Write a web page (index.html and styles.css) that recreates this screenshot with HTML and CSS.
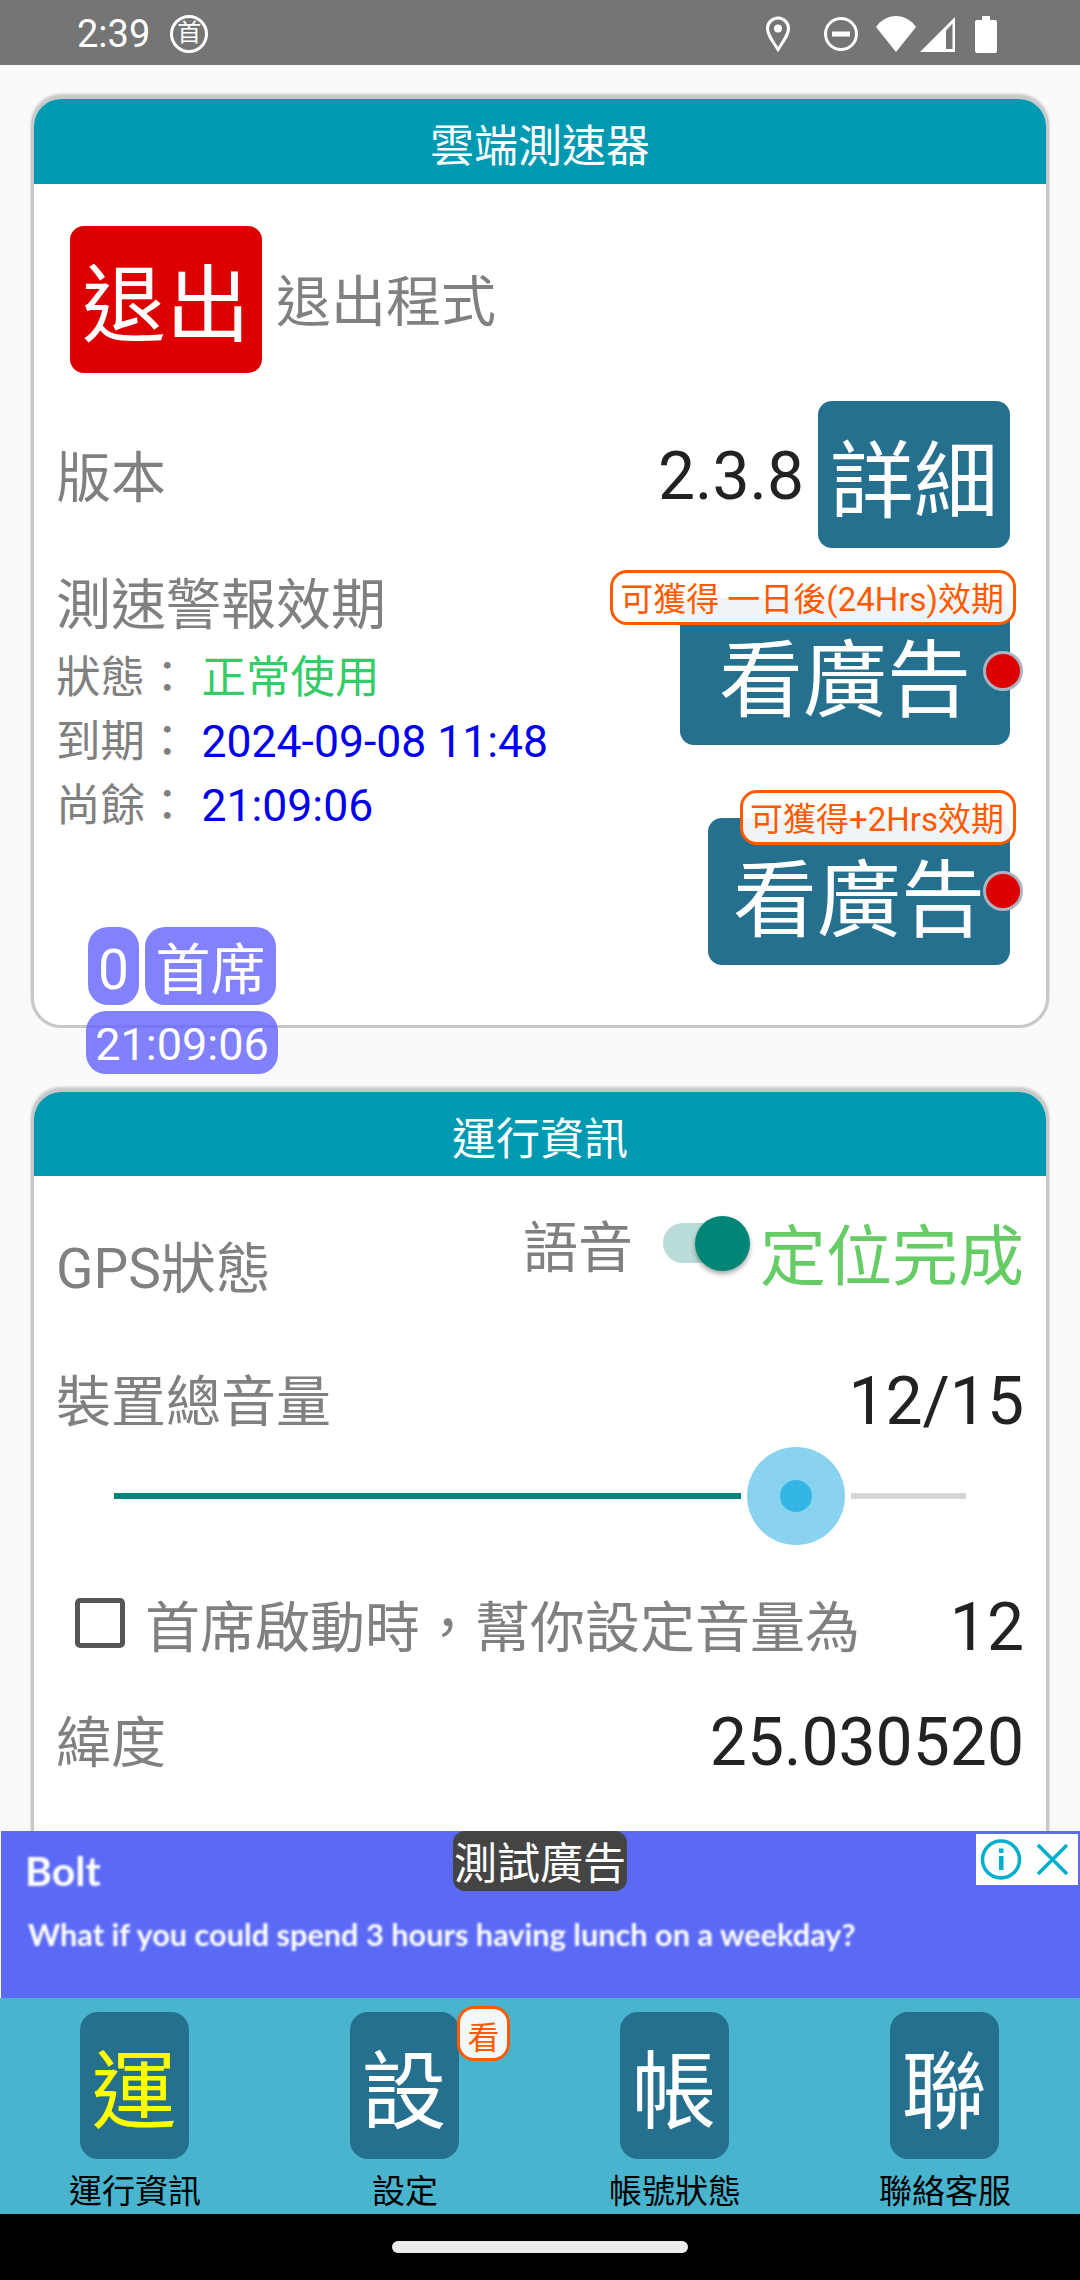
FILE: index.html
```html
<!DOCTYPE html>
<html lang="zh-Hant">
<head>
	<meta charset="UTF-8">
	<title>雲端測速器</title>
	<link rel="stylesheet" href="styles.css">
</head>
<body>
	<div class="statusbar">
		<span class="clock">2:39</span>
		<span class="notice">首</span>
		<div class="sysicons">
			<svg class="ic-pin" width="26" height="36" viewBox="0 0 26 36"><path d="M13 33.5C7 24 2.5 19 2.5 12.5a10.5 10.5 0 0 1 21 0C23.500 19 19 24 13 33.500Z" fill="none" stroke="#fff" stroke-width="3"/><circle cx="13" cy="12.500" r="4" fill="#fff"/></svg>
			<svg class="ic-dnd" width="36" height="36" viewBox="0 0 36 36"><circle cx="18" cy="18" r="15.500" fill="none" stroke="#fff" stroke-width="3"/><rect x="9" y="15.500" width="18" height="5" fill="#fff"/></svg>
			<svg class="ic-wifi" width="40" height="36" viewBox="0 0 40 36"><path d="M0 11C5 4 12 0 20 0s15 4 20 11L20 36Z" fill="#fff"/></svg>
			<svg class="ic-signal" width="35" height="35" viewBox="0 0 35 35"><path d="M35 0V35H0Z" fill="#fff"/><path d="M26 13.500V32H32.500V6.500Z" fill="#757575"/></svg>
			<svg class="ic-battery" width="22" height="37" viewBox="0 0 22 37"><path d="M7 0H15V4H20a2 2 0 0 1 2 2V35a2 2 0 0 1-2 2H2a2 2 0 0 1-2-2V6a2 2 0 0 1 2-2H7Z" fill="#fff"/></svg>
		</div>
	</div>

	<div class="scroll">
		<section class="card card-first">
			<h2 class="card-title">雲端測速器</h2>
			<div class="exit-row">
				<button class="btn btn-exit">退出</button>
				<span class="exit-label">退出程式</span>
			</div>
			<div class="version-row">
				<span class="label version-label">版本</span>
				<span class="value version-value">2.3.8</span>
				<button class="btn">詳細</button>
			</div>
			<div class="alert-row">
				<div class="alert-info">
					<div class="alert-title">測速警報效期</div>
					<div class="info-line">狀態： <span class="ok">正常使用</span></div>
					<div class="info-line">到期： <span class="date">2024-09-08 11:48</span></div>
					<div class="info-line">尚餘： <span class="date">21:09:06</span></div>
					<div class="seat">
						<div class="seat-top">
							<span class="pill pill-num">0</span>
							<span class="pill pill-name">首席</span>
						</div>
						<span class="pill pill-time">21:09:06</span>
					</div>
				</div>
				<div class="alert-actions">
					<div class="ad-btn ad-btn-day">
						<button class="btn btn-ad">看廣告</button>
						<span class="tag">可獲得 一日後(24Hrs)效期</span>
						<span class="dot"></span>
					</div>
					<div class="ad-btn ad-btn-hours">
						<button class="btn btn-ad">看廣告</button>
						<span class="tag">可獲得+2Hrs效期</span>
						<span class="dot"></span>
					</div>
				</div>
			</div>
		</section>

		<section class="card card-second">
			<h2 class="card-title">運行資訊</h2>
			<div class="gps-row">
				<span class="label gps-label">GPS狀態</span>
				<span class="label voice-label">語音</span>
				<span class="switch"><span class="switch-thumb"></span></span>
				<span class="gps-state">定位完成</span>
			</div>
			<div class="line-row volume-row">
				<span class="label">裝置總音量</span>
				<span class="value">12/15</span>
			</div>
			<div class="slider">
				<span class="slider-fill"></span>
				<span class="slider-thumb"><span class="slider-core"></span></span>
				<span class="slider-rest"></span>
			</div>
			<div class="line-row check-row">
				<span class="checkbox"></span>
				<span class="label check-label">首席啟動時，幫你設定音量為</span>
				<span class="value">12</span>
			</div>
			<div class="line-row lat-row">
				<span class="label">緯度</span>
				<span class="value">25.030520</span>
			</div>
		</section>
	</div>

	<div class="ad">
		<div class="ad-brand">Bolt</div>
		<div class="ad-copy">What if you could spend 3 hours having lunch on a weekday?</div>
		<div class="ad-test">測試廣告</div>
		<div class="ad-choice">
			<svg width="51" height="51" viewBox="0 0 51 51"><circle cx="25" cy="25.500" r="18.500" fill="none" stroke="#00aecd" stroke-width="3.500"/><rect x="23" y="22" width="4.500" height="14" fill="#00aecd"/><rect x="23" y="14.500" width="4.500" height="4.500" fill="#00aecd"/></svg>
			<svg width="51" height="51" viewBox="0 0 51 51"><path d="M11 11L40 40M40 11L11 40" fill="none" stroke="#00aecd" stroke-width="3.500"/></svg>
		</div>
	</div>

	<nav class="tabs">
		<div class="tab">
			<span class="tab-tile tab-active">運</span>
			<span class="tab-name">運行資訊</span>
		</div>
		<div class="tab">
			<span class="tab-tile">設</span>
			<span class="tab-name">設定</span>
			<span class="tab-badge">看</span>
		</div>
		<div class="tab">
			<span class="tab-tile">帳</span>
			<span class="tab-name">帳號狀態</span>
		</div>
		<div class="tab">
			<span class="tab-tile">聯</span>
			<span class="tab-name">聯絡客服</span>
		</div>
	</nav>

	<div class="navbar"><span class="home"></span></div>
</body>
</html>
```

FILE: styles.css
```css
* {
	margin: 0;
	padding: 0;
	box-sizing: border-box;
}
body {
	width: 1080px;
	height: 2280px;
	display: flex;
	flex-direction: column;
	overflow: hidden;
	background: #fafafa;
	font-family: Roboto, "Noto Sans CJK TC", sans-serif;
}
button {
	font-family: inherit;
	border: none;
}

/* status bar */
.statusbar {
	height: 65px;
	flex: none;
	display: flex;
	align-items: center;
	padding: 3px 0 0 77px;
	background: #757575;
	color: #fff;
}
.clock {
	font-size: 38px;
	line-height: 65px;
}
.notice {
	width: 38px;
	height: 38px;
	margin-left: 20px;
	border: 3px solid #fff;
	border-radius: 50%;
	font-size: 24px;
	line-height: 30px;
	text-align: center;
}
.sysicons {
	display: flex;
	align-items: center;
	margin-left: auto;
	padding-right: 83px;
}
.ic-dnd {
	margin-left: 32px;
}
.ic-wifi {
	margin-left: 17px;
}
.ic-signal {
	margin-left: 4px;
}
.ic-battery {
	margin-left: 20px;
}

/* cards */
.scroll {
	height: 1766px;
	flex: none;
	overflow: hidden;
	padding: 31px 31px 0;
}
.card {
	width: 1018px;
	border: 3px solid #c8c8c8;
	border-radius: 30px;
	background: #fff;
	box-shadow: 0 -2px 3px rgba(0, 0, 0, 0.2);
}
.card-second {
	margin-top: 61px;
	height: 900px;
}
.card-title {
	height: 85px;
	padding-top: 6px;
	border-radius: 27px 27px 0 0;
	background: #0099b2;
	color: #fff;
	font-size: 44px;
	font-weight: 400;
	line-height: 85px;
	text-align: center;
}
.card-second .card-title {
	height: 84px;
}
.label {
	padding-top: 1px;
	margin-bottom: -1px;
	color: #808080;
	font-size: 55px;
	line-height: 74px;
}
.version-label {
	padding-top: 3px;
	margin-bottom: -3px;
}
.value {
	padding-top: 1px;
	margin-bottom: -1px;
	color: #222;
	font-size: 66px;
	line-height: 74px;
}
.btn {
	width: 192px;
	height: 147px;
	border-radius: 14px;
	background: #26708f;
	color: #fff;
	font-size: 84px;
}

/* first card */
.exit-row {
	display: flex;
	align-items: center;
	margin-top: 42px;
	padding-left: 36px;
}
.btn-exit {
	padding-bottom: 2px;
	background: #dd0000;
}
.exit-label {
	margin: 0 0 6px 14px;
	color: #808080;
	font-size: 55px;
}
.version-row {
	display: flex;
	align-items: center;
	margin-top: 28px;
	padding: 0 36px 0 22px;
}
.version-value {
	padding-top: 2px;
	margin: 0 14px -2px auto;
}
.alert-row {
	display: flex;
	justify-content: space-between;
	padding: 0 36px 0 22px;
}
.alert-info {
	padding-top: 25px;
	color: #808080;
}
.alert-title {
	font-size: 55px;
	line-height: 64px;
	margin-bottom: 9px;
}
.info-line {
	font-size: 44.500px;
	line-height: 64px;
}
.ok,
.date {
	margin-left: 1px;
}
.ok {
	color: #33cc66;
}
.date {
	color: #0000ee;
}
.seat {
	display: flex;
	flex-direction: column;
	align-items: center;
	width: 192px;
	margin: 89px 0 -49px 30px;
	gap: 6px;
}
.seat-top {
	display: flex;
	gap: 6px;
}
.pill {
	height: 78px;
	border-radius: 20px;
	background: rgba(102, 102, 255, 0.82);
	color: #fff;
	font-size: 55px;
	line-height: 86px;
	text-align: center;
}
.pill-num {
	width: 51px;
}
.pill-name {
	width: 131px;
}
.pill-time {
	width: 192px;
	height: 63px;
	font-size: 45px;
	line-height: 68px;
}
.alert-actions {
	display: flex;
	flex-direction: column;
	align-items: flex-end;
	padding-top: 50px;
}
.ad-btn {
	position: relative;
	display: flex;
}
.ad-btn-hours {
	margin-top: 73px;
}
.btn-ad {
	height: 147px;
	padding-top: 4px;
}
.ad-btn-day .btn-ad {
	width: 330px;
}
.ad-btn-hours .btn-ad {
	width: 302px;
}
.tag {
	position: absolute;
	top: -28px;
	right: -6px;
	height: 55px;
	padding: 0 9px 0 7px;
	border: 3px solid #ff5a00;
	border-radius: 17px;
	background: rgba(255, 255, 255, 0.93);
	color: #ff5a00;
	font-size: 33px;
	line-height: 53px;
	white-space: nowrap;
}
.dot {
	position: absolute;
	top: 53px;
	right: -13px;
	width: 40px;
	height: 40px;
	border: 3px solid #a9b4c0;
	border-radius: 50%;
	background: #dd0000;
}

/* second card */
.gps-row {
	display: flex;
	align-items: flex-start;
	height: 94px;
	margin-top: 34px;
	padding: 0 22px;
}
.gps-label {
	margin-top: 21px;
}
.voice-label {
	margin-left: auto;
}
.switch {
	position: relative;
	width: 78px;
	height: 40px;
	margin: 13px 0 0 30px;
	border-radius: 20px;
	background: #badcd9;
}
.switch-thumb {
	position: absolute;
	top: -7px;
	right: -9px;
	width: 55px;
	height: 55px;
	border-radius: 50%;
	background: #008577;
	box-shadow: 0 3px 5px rgba(0, 0, 0, 0.35);
}
.gps-state {
	margin: 3px 0 0 19px;
	color: #66cc66;
	font-size: 66px;
	line-height: 90px;
}
.line-row {
	display: flex;
	align-items: center;
	justify-content: space-between;
	padding: 0 22px;
}
.volume-row {
	margin-top: 60px;
}
.slider {
	display: flex;
	align-items: center;
	gap: 6px;
	margin-top: 9px;
	padding-left: 80px;
}
.slider-fill {
	width: 627px;
	height: 6px;
	background: #008577;
}
.slider-thumb {
	display: flex;
	align-items: center;
	justify-content: center;
	width: 98px;
	height: 98px;
	border-radius: 50%;
	background: #89d3f0;
}
.slider-core {
	width: 32px;
	height: 32px;
	border-radius: 50%;
	background: #33b5e5;
}
.slider-rest {
	width: 115px;
	height: 6px;
	background: #d6d6d6;
}
.check-row {
	margin-top: 45px;
	padding-left: 41px;
}
.checkbox {
	width: 50px;
	height: 50px;
	margin-bottom: 8px;
	border: 5px solid #555;
	border-radius: 5px;
}
.check-label {
	margin-left: 20px;
	margin-right: auto;
}
.lat-row {
	margin-top: 41px;
}

/* ad */
.ad {
	position: relative;
	height: 167px;
	flex: none;
	margin-left: 1px;
	padding: 15px 0 0 27px;
	background: #5b6af5;
	color: #fff;
	font-family: Lato, sans-serif;
}
.ad-brand {
	margin-left: -3px;
	font-size: 41px;
	font-weight: 700;
	line-height: 50px;
	filter: blur(1px);
}
.ad-copy {
	margin-top: 19px;
	font-size: 30.700px;
	font-weight: 700;
	line-height: 40px;
	filter: blur(1px);
}
.ad-test {
	position: absolute;
	top: 0;
	left: 452px;
	width: 174px;
	height: 60px;
	border-radius: 12px;
	background: #444;
	font-family: Roboto, "Noto Sans CJK TC", sans-serif;
	font-size: 43px;
	line-height: 66px;
	text-align: center;
}
.ad-choice {
	position: absolute;
	top: 3px;
	right: 2px;
	display: flex;
	background: #fff;
}

/* bottom tabs */
.tabs {
	height: 216px;
	flex: none;
	display: flex;
	background: #48b4ce;
}
.tab {
	position: relative;
	width: 270px;
	display: flex;
	flex-direction: column;
	align-items: center;
	padding-top: 14px;
}
.tab-tile {
	width: 109px;
	height: 147px;
	margin-right: 2px;
	padding-top: 8px;
	border-radius: 18px;
	background: #26708f;
	color: #fff;
	font-size: 85px;
	line-height: 147px;
	text-align: center;
}
.tab-active {
	color: #ffff00;
}
.tab-name {
	margin-top: 11px;
	color: #000;
	font-size: 33px;
	line-height: 44px;
}
.tab-badge {
	position: absolute;
	top: 8px;
	left: 187px;
	width: 53px;
	height: 55px;
	padding-top: 9px;
	border: 3px solid #ff5a00;
	border-radius: 17px;
	background: #f0f8fa;
	color: #ff5a00;
	font-size: 32px;
	line-height: 40px;
	text-align: center;
}
.navbar {
	flex: 1;
	display: flex;
	justify-content: center;
	padding-top: 27px;
	background: #000;
}
.home {
	width: 296px;
	height: 12px;
	border-radius: 6px;
	background: #ececec;
}
```
